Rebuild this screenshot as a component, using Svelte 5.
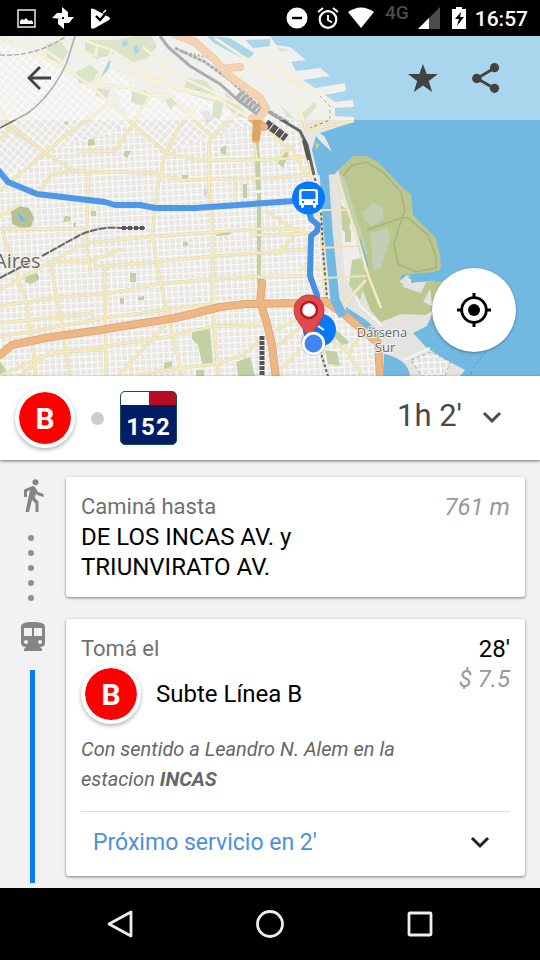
<script>
  const minorRoads = [
    'M0 36L5 40 60 65 90 85 133 124 165 152 195 160 270 160 305 157',
    'M75 37L112 50 150 75 160 83 175 88 220 100 245 115 256 124',
    'M88 84L130 88 148 95 170 95 190 115 212 137 209 143 209 190 213 232 213 305 218 376',
    'M107 105L60 140 45 153 0 190',
    'M10 125L45 153 75 171',
    'M0 108L10 125 6 134 0 140',
    'M28 37L62 62 M60 40L90 55 96 55 97 45 M112 68L150 80 220 98 M96 84L112 50',
    'M143 47L160 62 188 80 240 105 M170 53L163 75 150 93',
    'M77 151L115 151 133 124 150 95',
    'M40 190L52 174 75 171 155 173 180 180 270 178 312 175',
    'M88 171L88 190 86 245 91 276',
    'M195 110L180 125 165 155 157 190 152 235 160 280 182 376',
    'M212 137L240 110 M190 115L193 102',
    'M235 180L235 200 M252 125L257 160',
    'M0 229L85 229 M85 243L150 237 213 232 270 228 300 230',
    'M0 216L20 205 M0 290L85 243',
    'M50 262L90 261 123 249',
    'M93 267L157 262 213 256 270 252 310 249',
    'M0 306L60 297 105 294 165 283 213 279 270 276 310 276',
    'M0 323L94 313 M0 337L105 318 165 310 215 303',
    'M0 376L45 355 106 346 160 338 215 326 260 325',
    'M20 376L50 352 106 350 M118 376L165 325',
    'M105 268L106 376 M50 262L60 315 70 376 M2 230L27 305 36 376 M130 365L132 376',
    'M140 374L220 363 245 354 262 338',
    'M265 210L295 230 318 235 M276 255L296 234',
    'M300 268L325 268 M250 235L318 233',
    'M276 330L300 318 M272 350L300 328 M280 370L300 350 M330 340L348 352 362 376 M348 353L360 337',
    'M343 305L366 280',
    'M270 58L300 83 330 105 332 115 306 130 M270 78L285 76 305 90',
    'M306 130L296 95 275 85 M306 130L354 121',
    'M268 128L287 148 278 160 M290 145L306 175',
    'M338 180L358 240 368 275 381 308',
    'M300 130L310 165 314 190 321 225 325 300',
    'M215 38L245 58 270 75'
  ];
  const mainRoads = [
    'M175 34L195 42 215 60 228 75 260 98 266 108 258 120 256 139',
    'M228 68L240 67 M252 118L264 127',
    'M0 355L12 345 45 338 100 330 175 318 220 307 245 304 300 303 325 301 345 315 378 343 380 378',
    'M262 283L260 302 266 320 272 345 276 378'
  ];
  const parks = [
    'M85 40h30l20-4h16l6 10-9 12-14 4-17-9-20 6-12-9z',
    'M45 45l15-5 8 12-8 13-12-5z M76 72l14-7 8 6-5 10-14 3z',
    'M98 88l12 2-3 8-12-2z M132 92l14-2 4 8-8 8-11-4z M165 100l9-4 4 6-8 7z',
    'M188 78l18 3 10 12-4 8-20-6-8-7z M214 100l10 2-4 17-8-2z M225 92l16 15 8 12-13-3-10-10z',
    'M88 140l6-2 1 7-7 1z M125 151l6 0-4 7-4-3z M182 175l6 0 1 7-7-2z',
    'M26 276l11-3 2 7-8 4-6-2z M91 211h5v5h-5z M65 216l4 0 1 5-7 1z M130 273h6v9h-6z',
    'M192 332l18-3 3 36-10 2-5-22-6-6z M164 363l8-2v6l-8 2z M236 362l14-5 5 19h-17z M196 370h8v6h-8z',
    'M254 140l5 0 2 50h-5z M220 149l6-4v10l-4-1z M243 184h4v14h-4z M257 193h4v90h-4z',
    'M341 205l10 8-2 22-7-5z M352 260l10-2 4 20-6 22-11-15z M345 230h6v12h-6z',
    'M325 350l12 2 3 14-12-2z M334 328l10 9 6 6-8 2-8-8z',
    'M315 142l5 3-4 5z M283 150l6 3-6 15-5-5z M280 105l15 14-8-2z M277 47l12 3-8 2z',
    'M300 116l14-14 3 4-12 14z M0 361l6 9-2 6h-4z M183 60h5l-2 6z M120 298h4v6h-4z',
    'M138 297l6-1v4l-6 0z M183 242h5v4h-5z M216 234l14-2v3l-14 1z M224 324h9v3h-9z M64 122h5l-2 4z'
  ];
</script>

<div class="app">
  <header class="status">
    <div class="group left">
      <svg width="19" height="19" viewBox="0 0 19 19"><rect x="1" y="1" width="17" height="17" fill="none" stroke="#ddd" stroke-width="1.6"/><path d="M3 15v-3l2-2 2 1 2-2 3 3 2-1 2 2v2z" fill="#fff"/></svg>
      <svg width="24" height="24" viewBox="0 0 24 24"><path d="M11 1l6 5v5h-6zM23 11l-5 6h-5v-6zM13 23l-6-5v-5h6zM1 12l5-5h5v6z" fill="#fff"/></svg>
      <svg width="21" height="21" viewBox="0 0 21 21"><path d="M1 1q1-1 3 0l15 8q2 2 0 3L5 20q-4 2-4-1z" fill="#fff"/><path d="M6 8l4 4 8-9" stroke="#000" stroke-width="2.4" fill="none"/><path d="M13 5l3-3" stroke="#fff" stroke-width="1.5"/></svg>
    </div>
    <div class="group right">
      <svg width="22" height="22" viewBox="0 0 22 22"><circle cx="11" cy="11" r="10.5" fill="#fff"/><path d="M6 11h10" stroke="#000" stroke-width="2.4"/></svg>
      <svg width="22" height="22" viewBox="0 0 22 22"><circle cx="11" cy="12.5" r="8.3" fill="none" stroke="#fff" stroke-width="2.2"/><path d="M11 8v5l4 2.5M1 5l5-4M21 5l-5-4" stroke="#fff" stroke-width="1.9" fill="none"/></svg>
      <svg width="26" height="22" viewBox="0 0 26 22"><path d="M0 5Q13-4 26 5L13 21z" fill="#fff"/></svg>
      <span class="net">4G</span>
      <svg width="22" height="22" viewBox="0 0 22 22"><path d="M22 0v22H0z" fill="#4c4c4c"/><path d="M11 11v11H0z" fill="#fff"/></svg>
      <svg class="battery" width="14" height="22" viewBox="0 0 14 22"><path d="M4 0h6v2h4v20H0V2h4z" fill="#fff"/><path d="M9 5L3 12h4l-2 7 7-9H8z" fill="#000"/></svg>
      <time>16:57</time>
    </div>
  </header>

  <section class="map">
    <svg class="canvas" viewBox="0 36 540 340" preserveAspectRatio="xMidYMid slice" role="img" aria-label="Mapa del recorrido">
      <defs>
        <pattern id="grid" width="6" height="6" patternUnits="userSpaceOnUse" patternTransform="rotate(-3)"><path d="M0 0h6M0 0v6" stroke="#fafaf8" stroke-width="2.6"/></pattern>
        <pattern id="diag" width="6" height="6" patternUnits="userSpaceOnUse" patternTransform="rotate(40)"><path d="M0 0h6M0 0v6" stroke="#fafaf8" stroke-width="2.6"/></pattern>
        <clipPath id="city"><path d="M0 36H215L262 88 300 122 313 160 320 190 329 305 378 345 376 376H0z"/></clipPath>
        <filter id="soft" x="-30%" y="-30%" width="160%" height="160%"><feGaussianBlur stdDeviation="1.5"/></filter>
      </defs>
      <rect y="36" width="540" height="340" fill="#71b9e1"/>
      <path d="M0 36H270L276 45 290 47 306 60 291 62 296 71 320 68 330 76 303 80 315 88 345 83 346 91 325 95 335 102 353 100 354 107 335 108 335 116 354 117 354 122 320 133 325 137 332 152 322 143 316 136 312 150 318 175 324 176 327 225 333 305 345 318 372 342 388 350 405 365 410 376H0z" fill="#e7e6e2"/>
      <path d="M207 36L230 38 254 53 250 58 240 57 214 43zM245 40l25-1v7l-17 2z" fill="#71b9e1"/>
      <path d="M327 175l8-1 3-4 20 22 12 75 13 20 14-4 10-8 4 2 0 6 20-3 10 6-5 19-9 21-14 7 14 15 21 13 17 9-5 6h-52l-21-23-40-32-12-22-8-45z" fill="#e5e3df"/>
      <path d="M338 170L353 156 366 156 378 162 405 190 411 194 413 215 435 237 440 254 441 269 434 272 402 275 396 288 376 294 366 268 357 238z" fill="#bcc68f"/>
      <path d="M366 270l10-4 10 7 17 11 0 3 18 6 5-11 20-1-6 20-8 2-2-14-7 13 13 6-10 7-25-1-20 8-10-11-12-30z" fill="#bcc68f"/>
      <path d="M339 174l5 2 24 78-5 1zM363 212l10-9 10 5 1 11-13 7-7-6zM370 233l18-5 2 12-9 28-8 3z" fill="#c2cfb3"/>
      <path d="M343 176l8-10 15-4 17 10 18 20 4 20-4 6-34 12M402 218l6 0 20 17 8 22 0 11-20 4-18-8-4-20 8-26" fill="none" stroke="#a5b47d" stroke-width="1.5"/>
      <path d="M357 235l4 5 8 27-4-1-8-22zM346 307l20 13 19 18-6 0-33-23z" fill="#71b9e1"/>
      <path d="M407 277l10 5 22-1-10-5zM417 334l10 2 30 24-10-1-22-17z" fill="#71b9e1"/>
      <path d="M384 354q24 5 26 22h-27z" fill="#71b9e1"/>
      <path d="M342 190l14 44 5 30-4 26-12-12-4-48z" fill="#efeeeb"/>
      <g clip-path="url(#city)">
        <rect y="120" width="390" height="256" fill="url(#grid)"/>
        <path d="M0 36H190L265 110 256 124 212 137 165 152 130 124 40 155 0 180z" fill="#e7e6e2"/>
        <path d="M0 45L30 50 90 88 132 124 45 153 0 118zM0 125L45 154 0 190zM95 50L150 96 200 120 240 108 212 138 165 152 130 122zM160 85l90 30 5 10-43 10z" fill="url(#diag)"/>
      </g>
      <path d="M411 360l20-8 19 10-5 14h-23z" fill="url(#grid)" stroke="#71b9e1" stroke-dasharray="3 3"/>
      {#each parks as d}<path {d} fill="#c3d0a4"/>{/each}
      <path d="M11 211l7-5 11 2 5 10-3 9-10 1-9-4z" fill="#b6c296"/>
      <path d="M17 212l5 4 4 6-5-1zM105 63l6-3-2 9-9 9-4 2 6-10zM121 42l6-2 1 5-5 2zM133 47l4-2 3 6-5 4zM195 89l5 0-2 4zM36 274l3 3-2 2z" fill="#71b9e1"/>
      <path d="M168 102l7-3 2 5-6 3zM66 217h5v3h-5zM73 223h3v4h-3z" fill="#d6cdae"/>
      <path d="M200 112l7-2 8 8-8 5zM204 187l4 5-2 5-3-3z" fill="#d6d6d3"/>
      {#each minorRoads as d}<path {d} fill="none" stroke="#e4d9a6" stroke-width="3" stroke-linejoin="round"/>{/each}
      {#each minorRoads as d}<path {d} fill="none" stroke="#f4ebc3" stroke-width="2" stroke-linejoin="round"/>{/each}
      <g fill="none" stroke="#777">
        <path d="M75 36L67 62Q53 94 28 113L0 128" stroke-width="1.6"/>
        <path d="M0 55q35 2 65-18" stroke-width="1.4" stroke-dasharray="5 2"/>
        <path d="M160 36L168 47 190 66 220 84 238 100 262 118" stroke-width="3"/>
        <path d="M175 48L205 62 230 80 255 103 288 122" stroke-width="3" stroke-dasharray="4 1"/>
        <path d="M182 52L210 58" stroke-width="2" stroke-dasharray="2 2"/>
        <path d="M238 94L262 114" stroke-width="8" stroke-dasharray="4 1"/>
        <path d="M266 123L286 138" stroke="#555" stroke-width="8" stroke-dasharray="6 1"/>
        <path d="M262 108L300 131 307 145 314 175" stroke="#666" stroke-width="3"/>
        <path d="M304 140L309 160" stroke="#555" stroke-width="4"/>
        <path d="M320 96l10 10v14l-20 8" stroke-dasharray="3 3"/>
        <path d="M0 278L30 262M42 256L80 235Q100 226 120 228H145" stroke="#666" stroke-width="2" stroke-dasharray="8 1"/>
        <path d="M122 228h23" stroke="#555" stroke-width="4" stroke-dasharray="4 2"/>
        <path d="M262 336V376" stroke="#555" stroke-width="5" stroke-dasharray="4 1"/>
        <path d="M315 178L321 210 323 250 327 298M320 350l8 26" stroke="#666" stroke-width="2" stroke-dasharray="3 2"/>
      </g>
      {#each mainRoads as d}<path {d} fill="none" stroke="#dfa26c" stroke-width="8" stroke-linejoin="round" stroke-linecap="round"/>{/each}
      {#each mainRoads as d}<path {d} fill="none" stroke="#edb683" stroke-width="6.5" stroke-linejoin="round" stroke-linecap="round"/>{/each}
      <path d="M257 123l-1 14" stroke="#e3a45f" stroke-width="8" stroke-linecap="round"/>
      <path d="M324 172L328 230 335 300 343 316" fill="none" stroke="#71b9e1" stroke-width="9"/>
      <path d="M318 210h32M320 248l38-2M324 278l42-2" stroke="#eee3b6" stroke-width="2"/>
      <path d="M486 352l-14 17-2 7" fill="none" stroke="#529dd2" stroke-dasharray="4 2"/>
      <path d="M356 296l4 10 22 20M404 360l26-12" fill="none" stroke="#f6f5f2" stroke-width="2"/>
      <g class="place">
        <text x="-6" y="268" font-size="20">Aires</text>
        <text y="337" font-size="13" text-anchor="middle"><tspan x="382">Dársena</tspan><tspan x="385" dy="15">Sur</tspan></text>
      </g>
      <path d="M-2 170L8 182 37 194 105 202 115 205 140 205 155 208 195 208 308 200" fill="none" stroke="#4d98e8" stroke-width="6" stroke-linejoin="round"/>
      <path d="M309 211L311 219 318 225 317 231 311 236 310 276 317 295 318 326" fill="none" stroke="#4590e2" stroke-width="6" stroke-linejoin="round"/>
      <circle cx="308.500" cy="198" r="16.500" fill="#0878fa"/>
      <path d="M302 189h13q3 0 3 3v13h-2v2q-1 2-3 0v-2h-9v2q-2 2-3 0v-2h-2v-13q0-3 3-3z" fill="#fff"/><rect x="301.500" y="191" width="14" height="8" rx="1.500" fill="#0878fa"/><path d="M302 202h2m9 0h2" stroke="#0878fa" stroke-width="2"/>
      <circle cx="319.500" cy="330" r="16.500" fill="#0878fa"/><path d="M318 326l6 4" stroke="#fff" stroke-width="2"/>
      <ellipse cx="310" cy="340" rx="9" ry="5" fill="#222" opacity=".3" filter="url(#soft)"/>
      <path d="M309 295c-8 0-15 6-15 15 0 12 12 17 15 33 3-16 15-21 15-33 0-9-7-15-15-15z" fill="#e04a4c" stroke="#c33a3d"/><circle cx="309" cy="310" r="8" fill="#fff" stroke="#ba181c" stroke-width="2.500"/>
      <circle cx="313.500" cy="343.500" r="12.500" fill="#555" opacity=".25"/><circle cx="313.500" cy="343.500" r="10.300" fill="#4384f4" stroke="#fff" stroke-width="2.700"/>
    </svg>
    <div class="toolbar">
      <button class="tool back" aria-label="Volver"><svg width="26" height="26" viewBox="0 0 26 26"><path d="M25 13H3M14 2L3 13l11 11" fill="none" stroke="#424242" stroke-width="2.800"/></svg></button>
      <button class="tool" aria-label="Favorito"><svg width="30" height="28" viewBox="0 0 30 28"><path d="M15 0l3.700 10H30l-9.200 7 3.400 11L15 21.500 5.800 28l3.400-11L0 10h11.300z" fill="#424242"/></svg></button>
      <button class="tool share" aria-label="Compartir"><svg width="28" height="30" viewBox="0 0 28 30"><path d="M22.500 5L5 15.500 22.500 25.500" fill="none" stroke="#424242" stroke-width="2.800"/><circle cx="22.500" cy="4.700" r="4.600" fill="#424242"/><circle cx="4.800" cy="15.500" r="4.700" fill="#424242"/><circle cx="22.500" cy="25.300" r="4.600" fill="#424242"/></svg></button>
    </div>
    <button class="locate" aria-label="Mi ubicación"><svg width="34" height="34" viewBox="0 0 34 34"><circle cx="17" cy="17" r="12.300" fill="none" stroke="#000" stroke-width="2.800"/><circle cx="17" cy="17" r="6" fill="#000"/><path d="M17 0v5M17 29v5M0 17h5M29 17h5" stroke="#000" stroke-width="3"/></svg></button>
  </section>

  <section class="summary">
    <span class="line-badge">B</span>
    <span class="dot"></span>
    <span class="bus">152</span>
    <button class="total"><span>1h 2'</span><svg width="20" height="14" viewBox="0 0 20 14"><path d="M2 2l8 8 8-8" fill="none" stroke="#4a4a4a" stroke-width="3"/></svg></button>
  </section>

  <main class="steps">
    <article class="step">
      <div class="rail">
        <svg width="20" height="34" viewBox="0 0 20 34"><g fill="#858585"><circle cx="11.500" cy="3.200" r="3"/><path d="M7.500 7.500Q9 6.500 11 8l3 5 5.500 2v3L13 16l-1-2-1 5 3.500 3.500V33h-3v-8.500L8 21 5 33H1.500L6 11l-3 1.500V18H0v-7.500z"/></g></svg>
        <div class="dots"><i></i><i></i><i></i><i></i><i></i></div>
      </div>
      <div class="card">
        <div class="row"><p class="kind">Caminá hasta</p><p class="soft">761 m</p></div>
        <p class="place-name">DE LOS INCAS AV. y<br>TRIUNVIRATO AV.</p>
      </div>
    </article>

    <article class="step">
      <div class="rail train">
        <svg width="24" height="29" viewBox="0 0 24 29"><path fill-rule="evenodd" d="M0 5C0 1 5 0 12 0s12 1 12 5v16q0 4-5 4l2 2v2H3v-2l2-2q-5 0-5-4zM3 6v8h8V6zM13 6v8h8V6zM5 18a2 2 0 1 0 .1 0zM19 18a2 2 0 1 0 .1 0z" fill="#858585"/></svg>
        <div class="track"></div>
      </div>
      <div class="card ride">
        <div class="row">
          <div>
            <p class="kind">Tomá el</p>
            <div class="line"><span class="line-badge">B</span><p class="place-name">Subte Línea B</p></div>
          </div>
          <div class="cost"><p class="place-name">28'</p><p class="soft">$ 7.5</p></div>
        </div>
        <p class="detail">Con sentido a Leandro N. Alem en la<br>estacion <b>INCAS</b></p>
        <button class="next">Próximo servicio en 2'<svg width="20" height="14" viewBox="0 0 20 14"><path d="M2 2l8 8 8-8" fill="none" stroke="#212121" stroke-width="3"/></svg></button>
      </div>
    </article>
  </main>

  <nav class="system">
    <button aria-label="Atrás"><svg width="28" height="30" viewBox="0 0 28 30"><path d="M25 3v24L3 15z" fill="none" stroke="#eee" stroke-width="2.800" stroke-linejoin="round"/></svg></button>
    <button aria-label="Inicio"><svg width="30" height="30" viewBox="0 0 30 30"><circle cx="15" cy="15" r="12.500" fill="none" stroke="#eee" stroke-width="2.800"/></svg></button>
    <button aria-label="Recientes"><svg width="28" height="28" viewBox="0 0 28 28"><rect x="3" y="3" width="22" height="22" rx="1" fill="none" stroke="#eee" stroke-width="2.800"/></svg></button>
  </nav>
</div>

<style>
  :global(body) { margin: 0; background: #f2f2f4; }
  .app { min-height: 100vh; display: flex; flex-direction: column; font-family: Roboto, "Noto Sans", sans-serif; color: #000; }
  button { border: 0; padding: 0; background: none; font: inherit; cursor: pointer; }
  svg { display: block; flex: none; }
  p { margin: 0; }
  .status { height: 36px; background: #000; display: flex; justify-content: space-between; align-items: center; padding: 0 12px 0 17px; color: #fff; }
  .group { display: flex; align-items: center; }
  .left { gap: 15px; }
  .right { gap: 9px; }
  .net { font-size: 19px; line-height: 22px; color: #4c4c4c; padding: 0 0 10px 2px; font-weight: 500; }
  .battery { margin-left: 3px; }
  time { font-size: 21px; font-weight: 500; line-height: 36px; padding-top: 2px; }
  .map { position: relative; height: 340px; overflow: hidden; }
  .canvas { width: 100%; height: 100%; }
  .place text { font-family: "Open Sans", "Noto Sans", sans-serif; fill: #666; stroke: #f3f2ef; stroke-width: 2px; paint-order: stroke; }
  .toolbar { position: absolute; inset: 0 0 auto; height: 84px; box-sizing: border-box; padding: 0 23px 0 7px; display: flex; align-items: center; background: rgba(255, 255, 255, .4); }
  .tool { width: 63px; height: 63px; display: grid; place-items: center; }
  .back { margin-right: auto; }
  .locate { position: absolute; right: 24px; bottom: 24px; width: 84px; height: 84px; border-radius: 50%; background: #fff; display: grid; place-items: center; box-shadow: 0 1px 3px rgba(0, 0, 0, .35); }
  .summary { position: relative; height: 84px; box-sizing: border-box; padding: 0 38px 0 15px; background: #fff; display: flex; align-items: center; box-shadow: 0 1px 3px rgba(0, 0, 0, .55); }
  .line-badge { width: 52px; height: 52px; border: 4px solid #fff; border-radius: 50%; background: #f00; background-clip: padding-box; box-shadow: 0 2px 4px rgba(0, 0, 0, .3); display: grid; place-items: center; font-size: 30px; font-weight: 700; color: #fff; flex: none; }
  .dot { width: 13px; height: 13px; border-radius: 50%; background: #ccc; margin: 0 16px; }
  .bus { width: 57px; height: 54px; box-sizing: border-box; border: 1px solid #16563e; border-radius: 5px; padding-top: 15px; background: linear-gradient(90deg, #fff 50%, #ba0c20 50%) 0 0 / 100% 13px no-repeat, #021d68; color: #fff; font-size: 24px; font-weight: 700; line-height: 40px; letter-spacing: 1px; text-align: center; }
  .total { margin-left: auto; display: flex; align-items: center; gap: 20px; color: #4a4a4a; font-size: 31px; line-height: 40px; }
  .total span { padding-bottom: 4px; }
  .steps { flex: 1; padding: 17px 15px 5px; display: flex; flex-direction: column; gap: 22px; }
  .step { display: flex; }
  .rail { width: 51px; box-sizing: border-box; padding: 2px 0 0 9px; display: flex; flex-direction: column; }
  .dots { display: flex; flex-direction: column; gap: 9px; padding: 22px 0 0 4px; margin-bottom: -5px; }
  .dots i { width: 6px; height: 6px; border-radius: 50%; background: #909090; }
  .train { padding: 3px 0 0 6px; }
  .track { flex: 1; width: 5px; margin: 19px 0 -7px 9px; background: #0878ff; }
  .card { flex: 1; min-width: 0; box-sizing: border-box; background: #fff; border-radius: 3px; box-shadow: 0 1px 3px rgba(0, 0, 0, .5); padding: 15px; }
  .row { display: flex; justify-content: space-between; align-items: flex-start; }
  .kind, .soft, .place-name { font-size: 24px; line-height: 30px; }
  .kind { color: #707070; font-size: 22px; }
  .soft { color: #999; font-style: italic; }
  .cost { text-align: right; }
  .line { display: flex; align-items: center; gap: 15px; }
  .detail { color: #666; font-size: 20px; line-height: 30px; font-style: italic; padding: 10px 0 17px; }
  .next { width: 100%; border-top: 1px solid #ddd; padding: 16px 20px 0 12px; display: flex; align-items: center; justify-content: space-between; color: #4a90e2; font-size: 23px; line-height: 30px; }
  .ride { padding-bottom: 18px; }
  .system { height: 72px; background: #000; display: flex; justify-content: center; align-items: center; }
  .system button { width: 150px; height: 72px; display: grid; place-items: center; }
</style>
